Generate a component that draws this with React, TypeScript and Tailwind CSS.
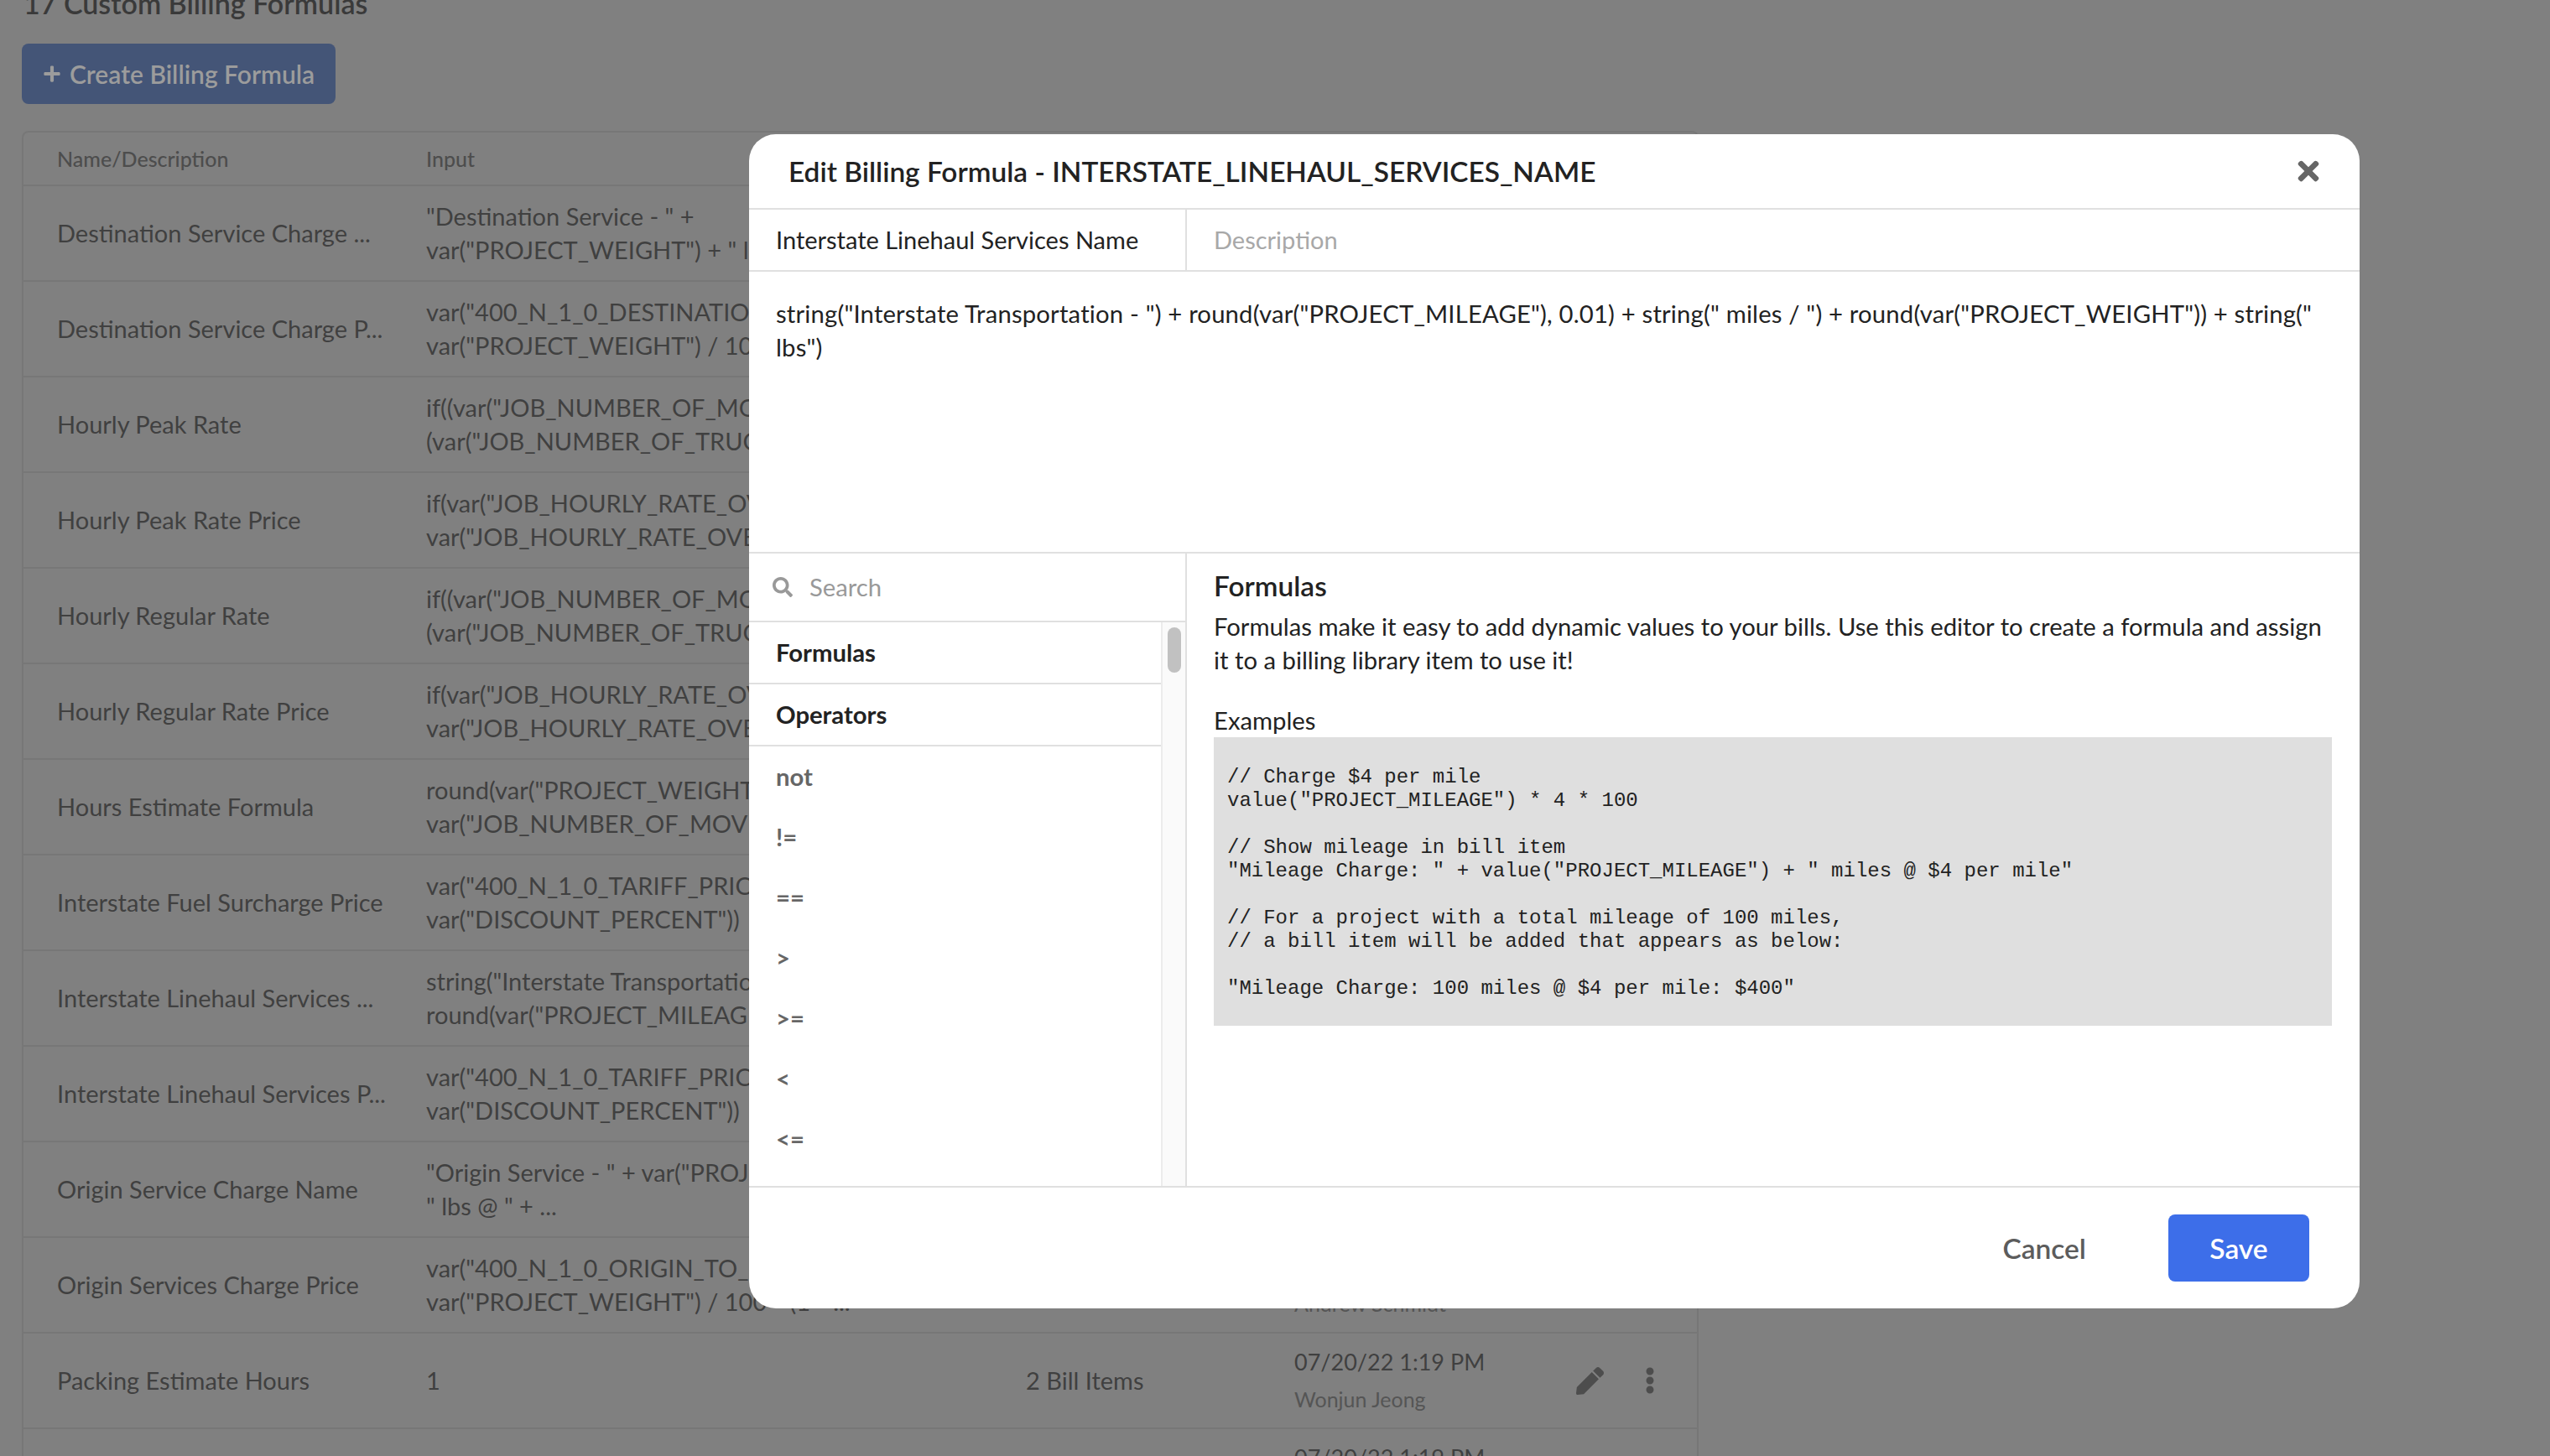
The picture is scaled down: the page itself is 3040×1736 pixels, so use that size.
import React from "react";
import { FaEllipsisV, FaPen, FaPlus, FaSearch, FaTimes } from "react-icons/fa";

const sans = "font-['Lato','Noto_Sans',sans-serif]";

const rows = [
  { name: "Destination Service Charge ...", input: ['"Destination Service - " +', 'var("PROJECT_WEIGHT") + " lbs @ " + ...'], items: "2 Bill Items", date: "07/20/22 1:19 PM", by: "Andrew Schmidt" },
  { name: "Destination Service Charge P...", input: ['var("400_N_1_0_DESTINATION_SIT_RATE") *', 'var("PROJECT_WEIGHT") / 100 * (1 * ...'], items: "2 Bill Items", date: "07/20/22 1:19 PM", by: "Andrew Schmidt" },
  { name: "Hourly Peak Rate", input: ['if((var("JOB_NUMBER_OF_MOVERS") == 2 &&', '(var("JOB_NUMBER_OF_TRUCKS") == 1 ...'], items: "2 Bill Items", date: "07/20/22 1:19 PM", by: "Andrew Schmidt" },
  { name: "Hourly Peak Rate Price", input: ['if(var("JOB_HOURLY_RATE_OVERRIDE") > 0,', 'var("JOB_HOURLY_RATE_OVERRIDE") ...'], items: "2 Bill Items", date: "07/20/22 1:19 PM", by: "Andrew Schmidt" },
  { name: "Hourly Regular Rate", input: ['if((var("JOB_NUMBER_OF_MOVERS") == 2 &&', '(var("JOB_NUMBER_OF_TRUCKS") == 1 ...'], items: "2 Bill Items", date: "07/20/22 1:19 PM", by: "Andrew Schmidt" },
  { name: "Hourly Regular Rate Price", input: ['if(var("JOB_HOURLY_RATE_OVERRIDE") > 0,', 'var("JOB_HOURLY_RATE_OVERRIDE") ...'], items: "2 Bill Items", date: "07/20/22 1:19 PM", by: "Andrew Schmidt" },
  { name: "Hours Estimate Formula", input: ['round(var("PROJECT_WEIGHT") / 1000 /', 'var("JOB_NUMBER_OF_MOVERS")) ...'], items: "2 Bill Items", date: "07/20/22 1:19 PM", by: "Andrew Schmidt" },
  { name: "Interstate Fuel Surcharge Price", input: ['var("400_N_1_0_TARIFF_PRICE") * (1 -', 'var("DISCOUNT_PERCENT"))'], items: "2 Bill Items", date: "07/20/22 1:19 PM", by: "Andrew Schmidt" },
  { name: "Interstate Linehaul Services ...", input: ['string("Interstate Transportation - ") +', 'round(var("PROJECT_MILEAGE"), 0.01) ...'], items: "2 Bill Items", date: "07/20/22 1:19 PM", by: "Andrew Schmidt" },
  { name: "Interstate Linehaul Services P...", input: ['var("400_N_1_0_TARIFF_PRICE") * (1 -', 'var("DISCOUNT_PERCENT"))'], items: "2 Bill Items", date: "07/20/22 1:19 PM", by: "Andrew Schmidt" },
  { name: "Origin Service Charge Name", input: ['"Origin Service - " + var("PROJECT_WEIGHT") +', '" lbs @ " + ...'], items: "2 Bill Items", date: "07/20/22 1:19 PM", by: "Andrew Schmidt" },
  { name: "Origin Services Charge Price", input: ['var("400_N_1_0_ORIGIN_TO_DEST_RATE") *', 'var("PROJECT_WEIGHT") / 100 * (1 * ...'], items: "2 Bill Items", date: "07/20/22 1:19 PM", by: "Andrew Schmidt" },
  { name: "Packing Estimate Hours", input: ["1"], items: "2 Bill Items", date: "07/20/22 1:19 PM", by: "Wonjun Jeong" },
  { name: "Packing Hourly Rate", input: ['if((if(var("JOB_HOURLY_RATE_OVERRIDE")) ...'], items: "2 Bill Items", date: "07/20/22 1:19 PM", by: "Wonjun Jeong" },
];

const operators = ["not", "!=", "==", ">", ">=", "<", "<="];

const example = `// Charge $4 per mile
value("PROJECT_MILEAGE") * 4 * 100

// Show mileage in bill item
"Mileage Charge: " + value("PROJECT_MILEAGE") + " miles @ $4 per mile"

// For a project with a total mileage of 100 miles,
// a bill item will be added that appears as below:

"Mileage Charge: 100 miles @ $4 per mile: $400"`;

const BillingTable = () => (
  <div className="mt-[32px] w-[1999px] rounded-t-lg border-2 border-b-0 border-[#777777] text-[29px] leading-[40px] text-[#404040]">
    <div className="flex h-[64px] items-center border-b-2 border-[#777777] pl-[40px] text-[25px] font-medium text-[#4d4d4d]">
      <div className="w-[440px]">Name/Description</div>
      <div>Input</div>
    </div>
    {rows.map((row) => (
      <div key={row.name} className="flex h-[114px] items-center border-b-2 border-[#777777] pl-[40px] whitespace-nowrap">
        <div className="w-[440px]">{row.name}</div>
        <div className="w-[715px]">
          {row.input.map((line) => (
            <div key={line}>{line}</div>
          ))}
        </div>
        <div className="w-[320px]">{row.items}</div>
        <div className="w-[336px] text-[27px]">
          <div>{row.date}</div>
          <div className="mt-[4px] text-[25px] text-[#555555]">{row.by}</div>
        </div>
        <FaPen className="h-[33px] w-[33px] text-[#4d4d4d]" />
        <FaEllipsisV className="ml-[49px] h-[32px] w-[12px] text-[#4d4d4d]" />
      </div>
    ))}
  </div>
);

const FormulaModal = () => (
  <div className="flex h-[1400px] w-[1920px] flex-col overflow-hidden rounded-[32px] bg-white text-[29.25px] leading-[40px] text-[#222222]">
    <div className="flex h-[90px] shrink-0 items-center justify-between border-b-2 border-[#e0e0e0] pr-[46px] pl-[47px]">
      <h2 className="text-[33.4px] font-semibold">
        Edit Billing Formula - INTERSTATE_LINEHAUL_SERVICES_NAME
      </h2>
      <FaTimes className="h-[36px] w-[30px] text-[#666666]" />
    </div>

    <div className="flex h-[74px] shrink-0 items-center border-b-2 border-[#e0e0e0]">
      <div className="flex h-full w-[522px] items-center border-r-2 border-[#e0e0e0] pl-[32px] text-[29px]">
        Interstate Linehaul Services Name
      </div>
      <div className="pl-[32px] text-[29px] text-[#a8a8a8]">Description</div>
    </div>

    <div className="h-[336px] shrink-0 border-b-2 border-[#e0e0e0] px-[32px] pt-[30px] tracking-[0.18px] whitespace-nowrap">
      string("Interstate Transportation - ") + round(var("PROJECT_MILEAGE"), 0.01) + string(" miles / ") + round(var("PROJECT_WEIGHT")) + string("
      <br />
      lbs")
    </div>

    <div className="flex h-[756px] shrink-0 border-b-2 border-[#e0e0e0]">
      <div className="flex w-[522px] shrink-0 flex-col border-r-2 border-[#e0e0e0]">
        <div className="flex h-[82px] shrink-0 items-center border-b-2 border-[#e0e0e0] pl-[28px] text-[#999999]">
          <FaSearch className="h-[24px] w-[24px]" />
          <span className="ml-[20px]">Search</span>
        </div>
        <div className="flex min-h-0 flex-1">
          <div className="w-[491px] shrink-0 overflow-hidden">
            {["Formulas", "Operators"].map((title) => (
              <div key={title} className="flex h-[74px] items-center border-b-2 border-[#e0e0e0] pl-[32px] font-bold">
                {title}
              </div>
            ))}
            {operators.map((op) => (
              <div key={op} className="flex h-[72px] items-center pl-[32px] font-bold text-[#666666]">
                {op}
              </div>
            ))}
          </div>
          <div className="flex-1 border-l-2 border-[#ececec] bg-[#fafafa] pt-[6px] pl-[6px]">
            <div className="h-[54px] w-[16px] rounded-lg bg-[#c1c1c1]" />
          </div>
        </div>
      </div>

      <div className="flex-1 pt-[18px] pr-[33px] pl-[32px]">
        <h3 className="text-[33.4px] font-semibold">Formulas</h3>
        <p className="mt-[9px] whitespace-nowrap">
          Formulas make it easy to add dynamic values to your bills. Use this editor to create a formula and assign
          <br />
          it to a billing library item to use it!
        </p>
        <div className="mt-[32px]">Examples</div>
        <pre className="bg-[#dfdfdf] px-[16px] pt-[34px] pb-[30px] font-['Liberation_Mono',monospace] text-[24px] leading-[28px] text-[#222222]">
          {example}
        </pre>
      </div>
    </div>

    <div className="flex flex-1 items-center justify-end pr-[60px] text-[33.5px]">
      <button className="font-semibold text-[#5c5c5c]">Cancel</button>
      <button className="ml-[98px] h-[80px] w-[168px] rounded-lg bg-[#3d6ee9] font-semibold text-white">Save</button>
    </div>
  </div>
);

export default function App() {
  return (
    <div className={`relative h-[1736px] w-[3040px] overflow-hidden bg-[#808080] ${sans}`}>
      <div className="-mt-[20px] px-[26px]">
        <h1 className="h-[48px] pl-[2px] text-[34px] leading-[48px] font-semibold text-[#3a3a3a]">17 Custom Billing Formulas</h1>
        <button className="mt-[24px] flex h-[72px] w-[374px] items-center justify-center gap-[10px] rounded-lg bg-[#445577] text-[30px] font-semibold text-[#9c9c9c]">
          <FaPlus className="h-[22px] w-[22px]" />
          Create Billing Formula
        </button>
        <BillingTable />
      </div>

      <div className="absolute inset-0 pt-[160px] pl-[893px]">
        <FormulaModal />
      </div>
    </div>
  );
}
